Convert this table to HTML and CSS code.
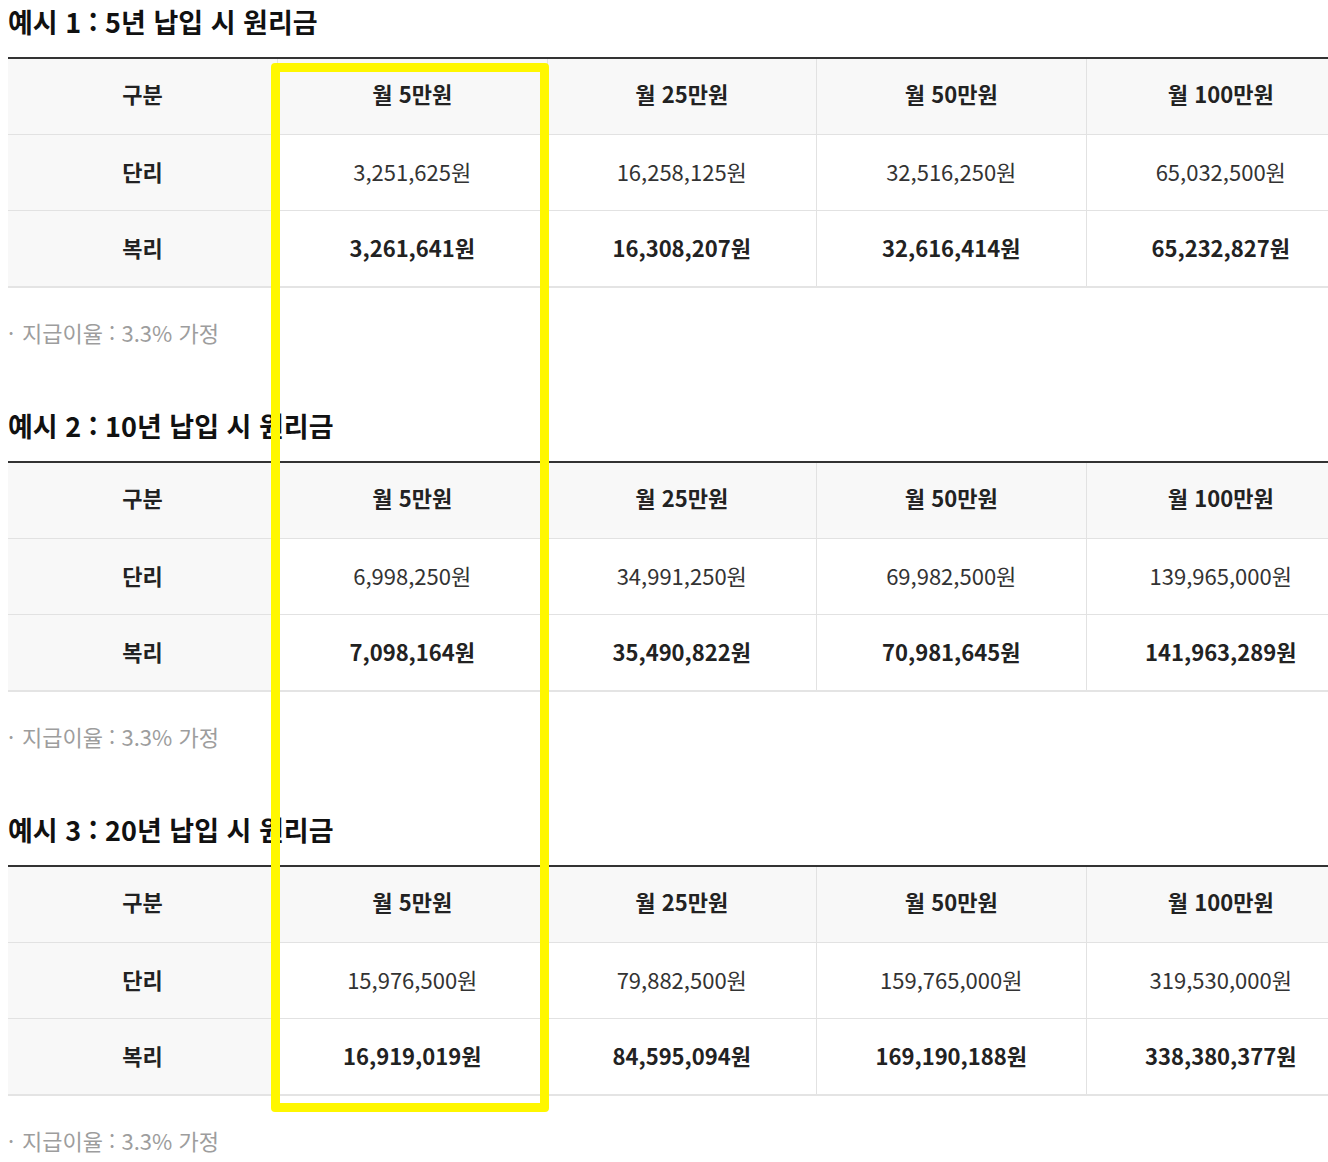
FILE: index.html
```html
<!DOCTYPE html>
<html lang="ko">
<head>
<meta charset="utf-8">
<title>예시 원리금</title>
<link rel="stylesheet" href="styles.css">
</head>
<body>
<div class="page">
  <section class="example">
    <h2 class="title">예시 1 : 5년 납입 시 원리금</h2>
    <table class="table">
      <colgroup><col><col><col><col><col></colgroup>
      <thead>
        <tr><th class="lead">구분</th><th>월 5만원</th><th>월 25만원</th><th>월 50만원</th><th>월 100만원</th></tr>
      </thead>
      <tbody>
        <tr><th class="lead">단리</th><td>3,251,625원</td><td>16,258,125원</td><td>32,516,250원</td><td>65,032,500원</td></tr>
        <tr class="strong"><th class="lead">복리</th><td>3,261,641원</td><td>16,308,207원</td><td>32,616,414원</td><td>65,232,827원</td></tr>
      </tbody>
    </table>
    <p class="note"><span class="dot">·</span>지급이율 : 3.3% 가정</p>
  </section>

  <section class="example">
    <h2 class="title">예시 2 : 10년 납입 시 원리금</h2>
    <table class="table">
      <colgroup><col><col><col><col><col></colgroup>
      <thead>
        <tr><th class="lead">구분</th><th>월 5만원</th><th>월 25만원</th><th>월 50만원</th><th>월 100만원</th></tr>
      </thead>
      <tbody>
        <tr><th class="lead">단리</th><td>6,998,250원</td><td>34,991,250원</td><td>69,982,500원</td><td>139,965,000원</td></tr>
        <tr class="strong"><th class="lead">복리</th><td>7,098,164원</td><td>35,490,822원</td><td>70,981,645원</td><td>141,963,289원</td></tr>
      </tbody>
    </table>
    <p class="note"><span class="dot">·</span>지급이율 : 3.3% 가정</p>
  </section>

  <section class="example">
    <h2 class="title">예시 3 : 20년 납입 시 원리금</h2>
    <table class="table">
      <colgroup><col><col><col><col><col></colgroup>
      <thead>
        <tr><th class="lead">구분</th><th>월 5만원</th><th>월 25만원</th><th>월 50만원</th><th>월 100만원</th></tr>
      </thead>
      <tbody>
        <tr><th class="lead">단리</th><td>15,976,500원</td><td>79,882,500원</td><td>159,765,000원</td><td>319,530,000원</td></tr>
        <tr class="strong"><th class="lead">복리</th><td>16,919,019원</td><td>84,595,094원</td><td>169,190,188원</td><td>338,380,377원</td></tr>
      </tbody>
    </table>
    <p class="note"><span class="dot">·</span>지급이율 : 3.3% 가정</p>
  </section>

  <div class="highlight"></div>
</div>
</body>
</html>
```

FILE: styles.css
```css
html, body {
  margin: 0;
  padding: 0;
  background: #fff;
}

body {
  font-family: "Noto Sans CJK KR", "Noto Sans", sans-serif;
  color: #222;
}

.page {
  position: relative;
  overflow: hidden;
  padding: 0 0 0 8px;
  height: 1162px;
}

.example {
  display: flex;
  flex-direction: column;
  align-items: flex-start;
}

.title {
  margin: 0;
  font-size: 27px;
  line-height: 44px;
  font-weight: 700;
  color: #111;
}

.table {
  margin-top: 13px;
  width: 1348px;
  table-layout: fixed;
  border-collapse: collapse;
  border-top: 2px solid #333;
  border-bottom: 2px solid #e4e4e4;
}

.table th,
.table td {
  font-size: 22px;
  line-height: 30px;
  padding: 21px 0 24px;
  text-align: center;
  border: 1px solid #e2e2e2;
  border-top: 0;
}

.table thead th {
  padding: 19px 0 26px;
  background: #f8f8f8;
  font-weight: 700;
  color: #222;
}

.table tr > :first-child {
  border-left: 0;
}

.table tbody th.lead {
  background: #f8f8f8;
  font-weight: 700;
  color: #222;
}

.table td {
  font-weight: 400;
  color: #333;
}

.table tr.strong td {
  font-weight: 700;
  color: #222;
}

.note {
  margin: 29px 0 57px;
  font-size: 22px;
  line-height: 30px;
  color: #9d9d9d;
}

.dot {
  display: inline-block;
  width: 14px;
}

.highlight {
  position: absolute;
  left: 271px;
  top: 63px;
  width: 260px;
  height: 1031px;
  border: 9px solid #fff700;
  border-radius: 4px;
}
```
